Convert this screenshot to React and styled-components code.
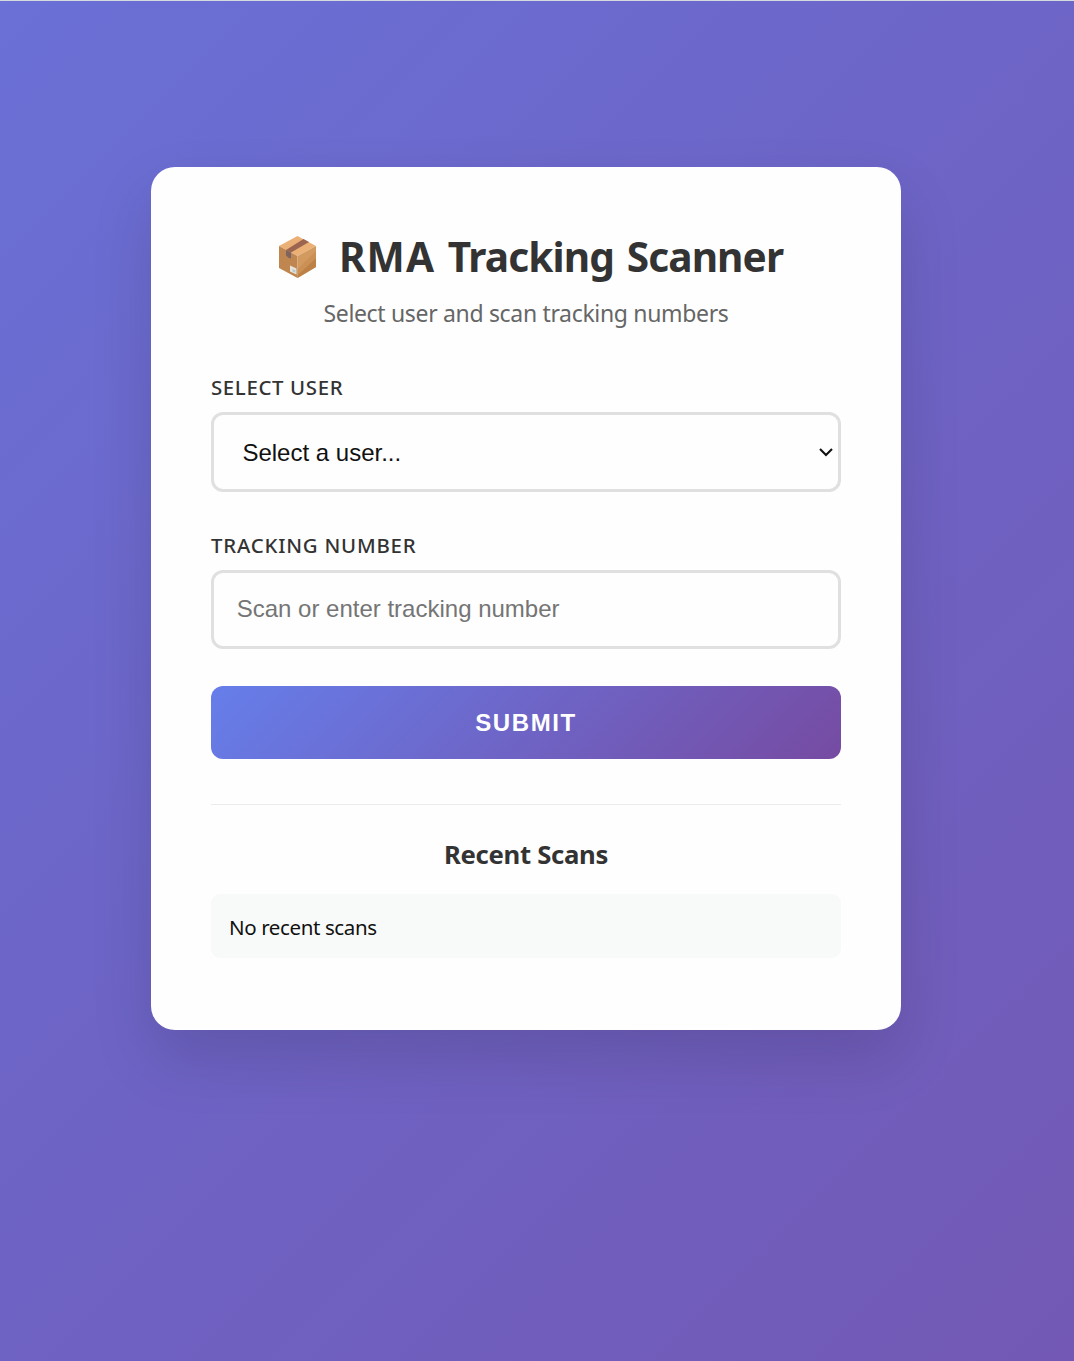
import React, { useState } from 'react';
import styled, { createGlobalStyle } from 'styled-components';

const GlobalStyle = createGlobalStyle`
  * { box-sizing: border-box; }
  body { margin: 0; }
`;

const Page = styled.main`
  display: flex;
  flex-direction: column;
  align-items: flex-start;
  height: 1361px;
  padding: 166px 0 0 151px;
  border-top: 1px solid #d5dade;
  overflow: hidden;
  background: linear-gradient(135deg, #6a70d6 0%, #6e62c3 55%, #7359b5 100%);
  font-family: 'Noto Sans', 'Open Sans', sans-serif;
  color: #333;
`;

const Card = styled.section`
  display: flex;
  flex-direction: column;
  width: 750px;
  height: 863px;
  padding: 60px;
  border-radius: 24px;
  background: #fefefe;
  box-shadow: 0 28px 62px rgba(0, 0, 0, 0.13);
`;

const Title = styled.h1`
  display: flex;
  align-items: center;
  gap: 22px;
  height: 60px;
  margin: 0;
  padding-left: 67px;
  font-size: 40.6px;
  line-height: 60px;
  font-weight: 700;
  letter-spacing: -0.9px;
  word-spacing: 3.2px;
  white-space: nowrap;
`;

const TitleText = styled.span`
  height: 60px;
`;

const Acronym = styled.span`
  letter-spacing: 1px;
`;

const Subtitle = styled.p`
  margin: 8px 0 0;
  height: 35px;
  line-height: 36px;
  font-size: 23px;
  letter-spacing: -0.33px;
  text-align: center;
  color: #666;
  white-space: nowrap;
`;

const Label = styled.label`
  height: 30px;
  margin-top: ${(p) => p.$gap}px;
  line-height: 31px;
  font-size: 20.4px;
  font-weight: 500;
  letter-spacing: ${(p) => p.$spacing}px;
  text-transform: uppercase;
  white-space: nowrap;
`;

const SelectBox = styled.div`
  display: grid;
  align-items: center;
  height: 80px;
  margin-top: 10px;

  > * { grid-area: 1 / 1; }
  > svg { justify-self: end; margin-right: 8px; pointer-events: none; }
`;

const Select = styled.select`
  appearance: none;
  width: 100%;
  height: 80px;
  padding: 0 28.4px;
  border: 3px solid #e0e0e0;
  border-radius: 12px;
  background: #fefefe;
  color: #111;
  font: 24px 'Liberation Sans', sans-serif;
`;

const Input = styled.input`
  width: 100%;
  height: 79px;
  margin-top: 10px;
  padding: 0 22.7px 2px;
  border: 3px solid #e0e0e0;
  border-radius: 12px;
  background: #fefefe;
  font: 24px 'Liberation Sans', sans-serif;
  &::placeholder { color: #757575; opacity: 1; }
`;

const SubmitButton = styled.button`
  height: 73px;
  margin-top: 37px;
  border: 0;
  border-radius: 12px;
  background: linear-gradient(135deg, #667eea 0%, #764ba2 100%);
  color: #fff;
  font: 700 24px 'Liberation Sans', sans-serif;
  letter-spacing: 1.6px;
  text-transform: uppercase;
`;

const Recent = styled.section`
  display: flex;
  flex-direction: column;
  margin-top: 45px;
  padding-top: 31px;
  border-top: 1px solid #ebebeb;
`;

const RecentTitle = styled.h2`
  height: 38px;
  margin: 0;
  line-height: 38px;
  font-size: 25.7px;
  font-weight: 700;
  text-align: center;
  letter-spacing: -0.3px;
`;

const ScanRow = styled.div`
  height: 64px;
  margin-top: 20px;
  padding: 0 18px;
  line-height: 66px;
  border-radius: 9px;
  background: #f8faf9;
  color: #111;
  font-size: 20.5px;
  letter-spacing: -0.38px;
`;

function PackageIcon() {
  return (
    <svg width="39" height="44" viewBox="0 0 39 44" aria-hidden="true">
      <path d="M19.5 1 38 11 19.5 21 1 11Z" fill="#eab076" />
      <path d="M1 11 19.5 21V43L1 33Z" fill="#bf8650" />
      <path d="M19.5 21 38 11V32L19.5 43Z" fill="#d39a60" />
      <path d="M38 23V32L19.5 43V40Z" fill="#bd8146" />
      <path d="M38 16 19.5 34V40L38 23Z" fill="#cb9055" />
      <path d="M25.5 4 31 7 13 17.5 8 15Z" fill="#9b6550" />
      <path d="M8 15 13 17.5V23.5L10.5 22.8 8 20.5Z" fill="#7d6460" />
      <path d="M12 30.5 18.5 33.5V39.5L12 36.5Z" fill="#e8e4dc" />
      <path d="M14.5 34 17.5 35.3V37.8L14.5 36.4Z" fill="#b7c6cd" />
    </svg>
  );
}

function Chevron() {
  return (
    <svg width="14" height="10" viewBox="0 0 14 10" aria-hidden="true">
      <path d="M1 2 7 8 13 2" fill="none" stroke="#111" strokeWidth="2.1" />
    </svg>
  );
}

export default function App() {
  const [tracking, setTracking] = useState('');
  return (
    <>
      <GlobalStyle />
      <Page>
        <Card>
          <Title>
            <PackageIcon />
            <TitleText><Acronym>RMA</Acronym> Tracking Scanner</TitleText>
          </Title>
          <Subtitle>Select user and scan tracking numbers</Subtitle>
          <Label htmlFor="user" $gap={42} $spacing={0.65}>Select User</Label>
          <SelectBox>
            <Select id="user"><option>Select a user...</option></Select>
            <Chevron />
          </SelectBox>
          <Label htmlFor="tracking" $gap={38} $spacing={0.8}>Tracking Number</Label>
          <Input
            id="tracking"
            value={tracking}
            onChange={(e) => setTracking(e.target.value)}
            placeholder="Scan or enter tracking number"
          />
          <SubmitButton type="button">Submit</SubmitButton>
          <Recent>
            <RecentTitle>Recent Scans</RecentTitle>
            <ScanRow>No recent scans</ScanRow>
          </Recent>
        </Card>
      </Page>
    </>
  );
}
